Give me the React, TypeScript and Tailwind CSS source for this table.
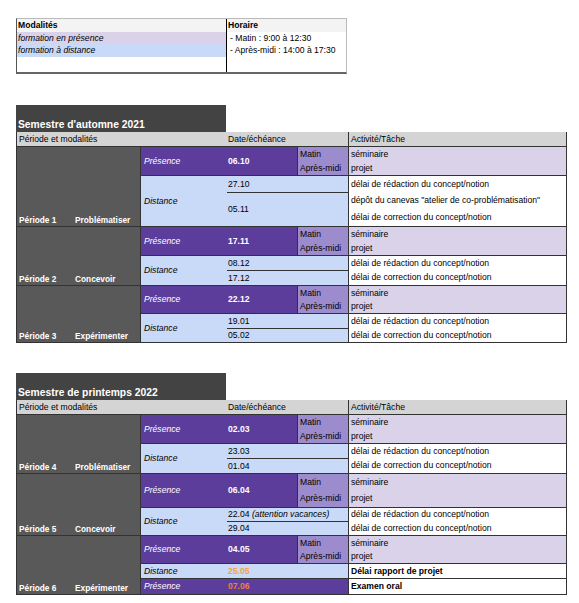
import React from 'react';

interface Act {
  text: string;
  h: string;
  bold?: boolean;
}

interface DateCell {
  date: React.ReactNode;
  h: string;
  acts: Act[];
  dateClass?: string;
}

interface Block {
  mode: 'presence' | 'distance';
  slots?: boolean;
  dates: DateCell[];
}

interface Period {
  label: string;
  phase: string;
  blocks: Block[];
}

interface Semester {
  title: string;
  mt: string;
  periods: Period[];
}

const seminar = (h1: string, h2: string, date: string): Block => ({
  mode: 'presence',
  slots: true,
  dates: [
    {
      date,
      h: '',
      acts: [
        { text: 'séminaire', h: h1 },
        { text: 'projet', h: h2 },
      ],
    },
  ],
});

const REDAC = 'délai de rédaction du concept/notion';
const CORR = 'délai de correction du concept/notion';

const semesters: Semester[] = [
  {
    title: "Semestre d'automne 2021",
    mt: 'mt-[31px]',
    periods: [
      {
        label: 'Période 1',
        phase: 'Problématiser',
        blocks: [
          seminar('h-[14px]', 'h-[14px]', '06.10'),
          {
            mode: 'distance',
            dates: [
              { date: '27.10', h: 'h-[16px]', acts: [{ text: REDAC, h: 'h-[16px]' }] },
              {
                date: '05.11',
                h: 'h-[34px]',
                acts: [
                  { text: 'dépôt du canevas "atelier de co-problématisation"', h: 'h-[17px]' },
                  { text: CORR, h: 'h-[17px]' },
                ],
              },
            ],
          },
        ],
      },
      {
        label: 'Période 2',
        phase: 'Concevoir',
        blocks: [
          seminar('h-[14px]', 'h-[14px]', '17.11'),
          {
            mode: 'distance',
            dates: [
              { date: '08.12', h: 'h-[14px]', acts: [{ text: REDAC, h: 'h-[14px]' }] },
              { date: '17.12', h: 'h-[15px]', acts: [{ text: CORR, h: 'h-[15px]' }] },
            ],
          },
        ],
      },
      {
        label: 'Période 3',
        phase: 'Expérimenter',
        blocks: [
          seminar('h-[14px]', 'h-[13px]', '22.12'),
          {
            mode: 'distance',
            dates: [
              { date: '19.01', h: 'h-[14px]', acts: [{ text: REDAC, h: 'h-[14px]' }] },
              { date: '05.02', h: 'h-[14px]', acts: [{ text: CORR, h: 'h-[14px]' }] },
            ],
          },
        ],
      },
    ],
  },
  {
    title: 'Semestre de printemps 2022',
    mt: 'mt-[30px]',
    periods: [
      {
        label: 'Période 4',
        phase: 'Problématiser',
        blocks: [
          seminar('h-[14px]', 'h-[14px]', '02.03'),
          {
            mode: 'distance',
            dates: [
              { date: '23.03', h: 'h-[14px]', acts: [{ text: REDAC, h: 'h-[14px]' }] },
              { date: '01.04', h: 'h-[15px]', acts: [{ text: CORR, h: 'h-[15px]' }] },
            ],
          },
        ],
      },
      {
        label: 'Période 5',
        phase: 'Concevoir',
        blocks: [
          seminar('h-[16px]', 'h-[17px]', '06.04'),
          {
            mode: 'distance',
            dates: [
              {
                date: (
                  <span>
                    22.04 <i>(attention vacances)</i>
                  </span>
                ),
                h: 'h-[13px]',
                acts: [{ text: REDAC, h: 'h-[13px]' }],
              },
              { date: '29.04', h: 'h-[14px]', acts: [{ text: CORR, h: 'h-[14px]' }] },
            ],
          },
        ],
      },
      {
        label: 'Période 6',
        phase: 'Expérimenter',
        blocks: [
          seminar('h-[14px]', 'h-[13px]', '04.05'),
          {
            mode: 'distance',
            dates: [
              {
                date: '25.05',
                h: 'h-[14px]',
                dateClass: 'font-bold text-[#f4a340]',
                acts: [{ text: 'Délai rapport de projet', h: 'h-[14px]', bold: true }],
              },
            ],
          },
          {
            mode: 'presence',
            dates: [
              {
                date: '07.06',
                h: 'h-[15px]',
                dateClass: 'font-bold text-[#f07f36]',
                acts: [{ text: 'Examen oral', h: 'h-[15px]', bold: true }],
              },
            ],
          },
        ],
      },
    ],
  },
];

const Activities = ({ acts, lavender }: { acts: Act[]; lavender: boolean }) => (
  <div
    className={`w-[218px] flex flex-col border-l border-[#333] ${lavender ? 'bg-[#d9d2e9]' : 'bg-white'}`}
  >
    {acts.map((a, i) => (
      <div key={i} className={`${a.h} flex items-center pl-[2px] ${a.bold ? 'font-bold' : ''}`}>
        {a.text}
      </div>
    ))}
  </div>
);

const BlockRow = ({ block, first }: { block: Block; first: boolean }) => {
  const border = first ? '' : 'border-t border-[#333]';

  if (block.mode === 'presence' && block.slots) {
    const cell = block.dates[0];
    return (
      <div className={`flex ${border}`}>
        <div className="w-[86px] bg-[#5c3d9c] text-white italic flex items-center pl-[3px]">Présence</div>
        <div className="w-[70px] bg-[#5c3d9c] text-white font-bold flex items-center pl-[1px]">{cell.date}</div>
        <div className="w-[51px] bg-[#9d8ccd] border-l border-[#333] flex flex-col">
          {cell.acts.map((a, i) => (
            <div key={i} className={`${a.h} flex items-center pl-[2px]`}>
              {i === 0 ? 'Matin' : 'Après-midi'}
            </div>
          ))}
        </div>
        <Activities acts={cell.acts} lavender />
      </div>
    );
  }

  const isPresence = block.mode === 'presence';
  const bg = isPresence ? 'bg-[#5c3d9c]' : 'bg-[#c9daf8]';

  return (
    <div className={`flex ${border}`}>
      <div className={`w-[86px] ${bg} italic flex items-center pl-[3px] ${isPresence ? 'text-white' : ''}`}>
        {isPresence ? 'Présence' : 'Distance'}
      </div>
      <div className={`w-[121px] ${bg} flex flex-col`}>
        {block.dates.map((d, i) => (
          <div
            key={i}
            className={`${d.h} flex items-center pl-[1px] ${i > 0 ? 'border-t border-[#333]' : ''} ${d.dateClass ?? ''}`}
          >
            {d.date}
          </div>
        ))}
      </div>
      <Activities acts={block.dates.flatMap((d) => d.acts)} lavender={false} />
    </div>
  );
};

const PeriodRow = ({ period }: { period: Period }) => (
  <div className="flex border-t border-[#333]">
    <div className="w-[124px] bg-[#595959] border-r border-[#333] flex items-end pb-[2px] pl-[2px] text-white font-bold text-[8.3px]">
      <span className="w-[56px]">{period.label}</span>
      <span>{period.phase}</span>
    </div>
    <div className="flex flex-col">
      {period.blocks.map((b, i) => (
        <BlockRow key={i} block={b} first={i === 0} />
      ))}
    </div>
  </div>
);

const SemesterTable = ({ sem }: { sem: Semester }) => (
  <div className={sem.mt}>
    <div className="w-[210px] h-[27px] bg-[#434343] text-white font-bold text-[10.3px] leading-[12px] flex items-end pb-[1px] pl-[2px]">
      {sem.title}
    </div>
    <div className="w-[551px] border-x border-b border-[#333]">
      <div className="flex h-[14px] bg-[#d4d4d4] items-center">
        <div className="w-[210px] pl-[2px]">Période et modalités</div>
        <div className="w-[121px] pl-[1px]">Date/échéance</div>
        <div className="flex-1 h-full flex items-center border-l border-[#333] pl-[2px]">Activité/Tâche</div>
      </div>
      {sem.periods.map((p) => (
        <PeriodRow key={p.label} period={p} />
      ))}
    </div>
  </div>
);

const Legend = () => (
  <div className="w-[331px] flex border-l border-[#555] border-t border-t-[#bbb] border-r border-r-[#bbb] border-b-2 border-b-[#666]">
    <div className="w-[209px] flex flex-col">
      <div className="h-[13px] bg-[#f3f3f3] font-bold flex items-center pl-[1px]">Modalités</div>
      <div className="h-[12px] bg-[#d9d2e9] italic flex items-center pl-[1px]">formation en présence</div>
      <div className="h-[13px] bg-[#c9daf8] italic flex items-center pl-[1px]">formation à distance</div>
      <div className="h-[15px]" />
    </div>
    <div className="flex-1 flex flex-col border-l border-black">
      <div className="h-[13px] bg-[#f3f3f3] font-bold flex items-center pl-[1px]">Horaire</div>
      <div className="h-[12px] flex items-center pl-[3px]">- Matin : 9:00 à 12:30</div>
      <div className="h-[13px] flex items-center pl-[3px]">- Après-midi : 14:00 à 17:30</div>
    </div>
  </div>
);

export default function App() {
  return (
    <div className="min-h-[603px] w-[579px] bg-white pt-[18px] pl-[16px] text-[8.6px] leading-none text-black font-['Liberation_Sans',Arial,sans-serif]">
      <Legend />
      {semesters.map((s) => (
        <SemesterTable key={s.title} sem={s} />
      ))}
    </div>
  );
}
